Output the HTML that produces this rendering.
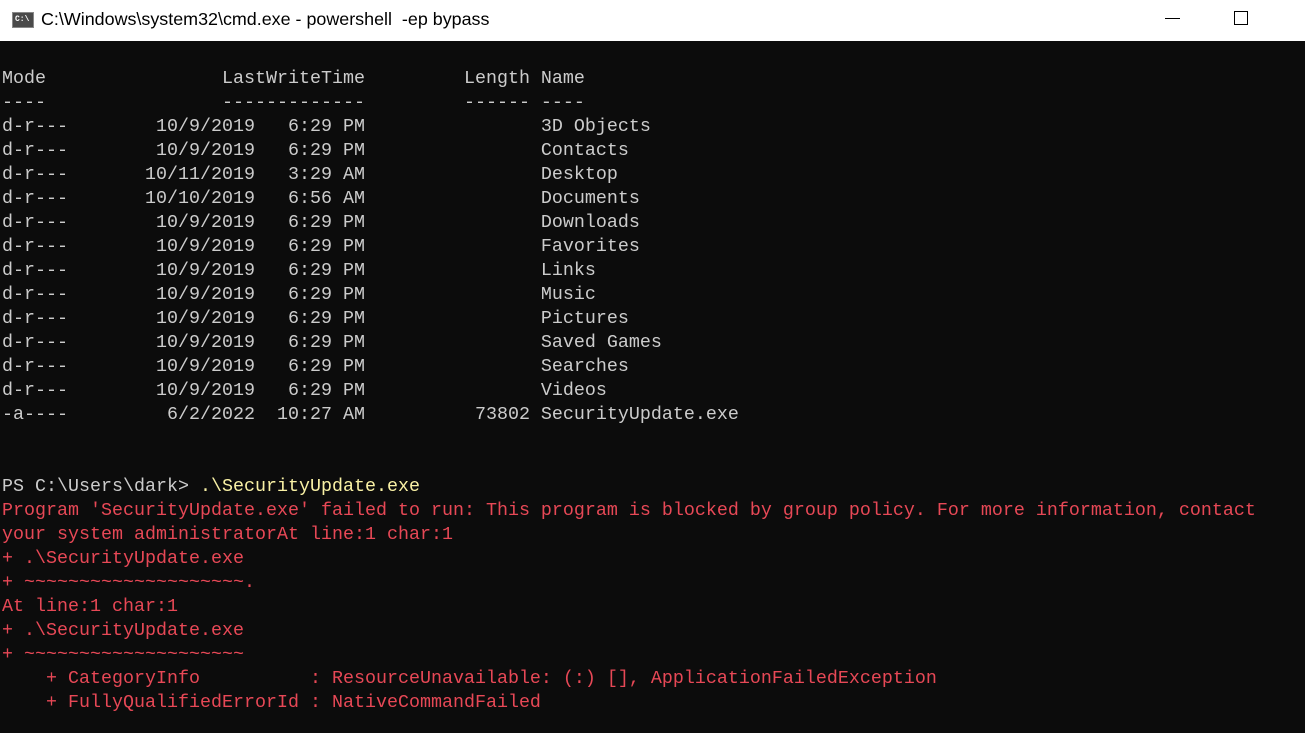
<!DOCTYPE html>
<html><head><meta charset="utf-8"><style>
html,body{margin:0;padding:0;width:1305px;height:733px;overflow:hidden;background:#0c0c0c;}
.tb{position:absolute;left:0;top:0;width:1305px;height:41px;background:#fff;}
.tt{position:absolute;left:41px;top:9px;font:17.9px "Liberation Sans",sans-serif;color:#000;white-space:pre;}
.ico{position:absolute;left:12px;top:12px;width:22px;height:16px;background:#4a4a4a;border:1px solid #888;box-sizing:border-box;}
.ico span{position:absolute;left:2px;top:2px;font:bold 8px "Liberation Mono",monospace;color:#fff;line-height:10px;}
.min{position:absolute;left:1165px;top:18px;width:15px;height:1px;background:#000;}
.max{position:absolute;left:1234px;top:11px;width:14px;height:14px;border:1px solid #000;box-sizing:border-box;}
pre{position:absolute;left:2px;top:67px;margin:0;font:18.33px/24px "Liberation Mono",monospace;color:#cccccc;white-space:pre;}
.r{color:#e74856}.y{color:#f9f1a5}
</style></head><body>
<div class="tb"><div class="ico"><span>C:\</span></div><div class="tt">C:\Windows\system32\cmd.exe - powershell  -ep bypass</div><div class="min"></div><div class="max"></div></div>
<pre>Mode                LastWriteTime         Length Name
----                -------------         ------ ----
d-r---        10/9/2019   6:29 PM                3D Objects
d-r---        10/9/2019   6:29 PM                Contacts
d-r---       10/11/2019   3:29 AM                Desktop
d-r---       10/10/2019   6:56 AM                Documents
d-r---        10/9/2019   6:29 PM                Downloads
d-r---        10/9/2019   6:29 PM                Favorites
d-r---        10/9/2019   6:29 PM                Links
d-r---        10/9/2019   6:29 PM                Music
d-r---        10/9/2019   6:29 PM                Pictures
d-r---        10/9/2019   6:29 PM                Saved Games
d-r---        10/9/2019   6:29 PM                Searches
d-r---        10/9/2019   6:29 PM                Videos
-a----         6/2/2022  10:27 AM          73802 SecurityUpdate.exe


PS C:\Users\dark&gt; <span class="y">.\SecurityUpdate.exe</span>
<span class="r">Program 'SecurityUpdate.exe' failed to run: This program is blocked by group policy. For more information, contact
your system administratorAt line:1 char:1
+ .\SecurityUpdate.exe
+ ~~~~~~~~~~~~~~~~~~~~.
At line:1 char:1
+ .\SecurityUpdate.exe
+ ~~~~~~~~~~~~~~~~~~~~
    + CategoryInfo          : ResourceUnavailable: (:) [], ApplicationFailedException
    + FullyQualifiedErrorId : NativeCommandFailed</span></pre>
</body></html>
